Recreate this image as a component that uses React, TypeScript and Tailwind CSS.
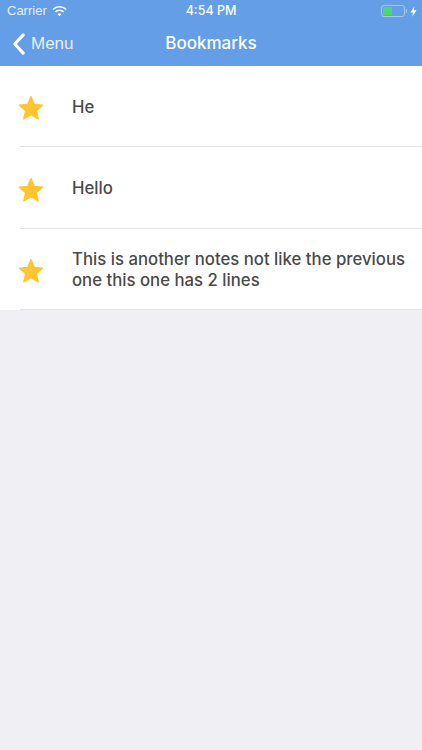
const rows = [
  { id: 1, text: "He", height: "h-[81px]" },
  { id: 2, text: "Hello", height: "h-[82px]" },
  { id: 3, text: "This is another notes not like the previous one this one has 2 lines", height: "h-[81px]" },
];

function Star() {
  return (
    <svg viewBox="0 0 24 24" className="-ml-[2px] mt-1 h-[26px] w-[26px] shrink-0">
      <path
        fill="#fec62e"
        stroke="#fec62e"
        strokeWidth="1.2"
        strokeLinejoin="round"
        d="M12 1.5l3.1 7.2 7.6.7-5.8 5.1 1.8 7.6L12 18.1l-6.7 4 1.8-7.6-5.8-5.1 7.6-.7z"
      />
    </svg>
  );
}

function StatusBar() {
  return (
    <div className="relative flex h-[22px] items-center text-[13px] text-white">
      <span className="ml-[7px] text-[#e3edfa]">Carrier</span>
      <svg viewBox="0 0 16 12" className="ml-[5px] h-[12px] w-[15px]" fill="none" stroke="white" strokeWidth="1.7">
        <path d="M1 4.4a10 10 0 0 1 14 0" />
        <path d="M3.5 7a6.4 6.4 0 0 1 9 0" />
        <path d="M8 11.6 5.9 9.4a3 3 0 0 1 4.2 0z" fill="white" stroke="none" />
      </svg>
      <span className="absolute left-0 right-0 text-center font-['Inter',sans-serif] text-[12.5px] font-medium">4:54 PM</span>
      <div className="ml-auto mr-[5px] flex items-center">
        <div className="h-[12px] w-[24px] rounded-[3px] border border-[#a9c8f0] p-px">
          <div className="h-full w-[9px] rounded-[1px] bg-[#4cd964]" />
        </div>
        <div className="ml-px h-[4px] w-px bg-[#a9c8f0]" />
        <svg viewBox="0 0 8 12" className="ml-[3px] h-[11px] w-[7px]" fill="white">
          <path d="M5 0 0.5 7H3.4L2.6 12 7.5 4.6H4.4z" />
        </svg>
      </div>
    </div>
  );
}

function NavBar() {
  return (
    <div className="relative flex h-[44px] items-center text-white">
      <svg viewBox="0 0 14 24" className="ml-[12px] h-[22px] w-[14px]" fill="none" stroke="white" strokeWidth="3.4" strokeLinecap="round" strokeLinejoin="round">
        <path d="M11.5 2 2.5 12l9 10" />
      </svg>
      <span className="ml-[5px] text-[17px] text-[#e9f1fc]">Menu</span>
      <span className="absolute left-0 right-0 text-center font-['Inter',sans-serif] text-[17px] font-medium">Bookmarks</span>
    </div>
  );
}

export default function App() {
  return (
    <div className="flex h-[750px] w-[422px] flex-col overflow-hidden bg-[#efeff4] font-['Liberation_Sans',Arial,sans-serif]">
      <div className="h-[66px] bg-[#639ee6]">
        <StatusBar />
        <NavBar />
      </div>
      <div className="bg-white">
        {rows.map((row) => (
          <div key={row.id} className="pl-[20px]">
            <div className={`flex items-center ${row.height} border-b border-[#e3e3e6]`}>
              <Star />
              <p className="ml-[28px] pt-[2px] font-['Inter',sans-serif] text-[16.75px] leading-[21px] font-medium text-[#4a4a4a]">{row.text}</p>
            </div>
          </div>
        ))}
      </div>
    </div>
  );
}
